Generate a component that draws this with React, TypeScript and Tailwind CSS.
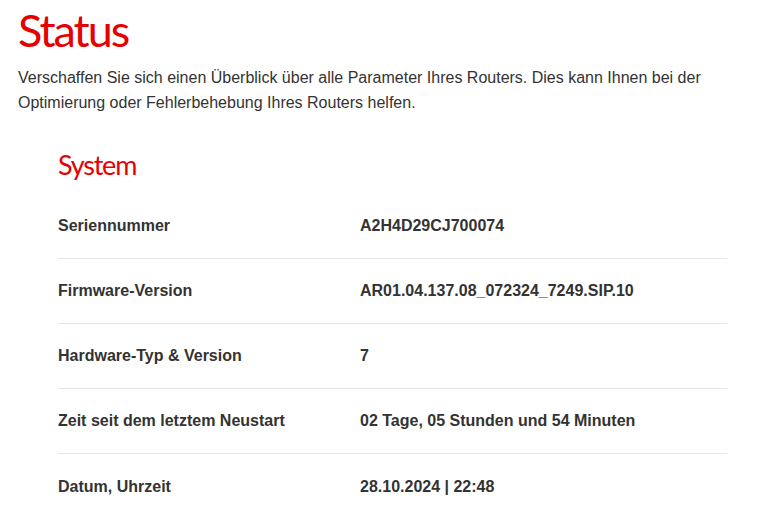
const rows: [string, string][] = [
  ["Seriennummer", "A2H4D29CJ700074"],
  ["Firmware-Version", "AR01.04.137.08_072324_7249.SIP.10"],
  ["Hardware-Typ & Version", "7"],
  ["Zeit seit dem letztem Neustart", "02 Tage, 05 Stunden und 54 Minuten"],
  ["Datum, Uhrzeit", "28.10.2024 | 22:48"],
];

export default function App() {
  return (
    <div className="min-h-screen bg-white px-[18px] font-['Liberation_Sans',Arial,sans-serif] text-[#333333]">
      <h1 className="pt-[2px] font-['Lato',sans-serif] text-[45px] leading-[56px] tracking-[-2px] text-[#e60000]">
        Status
      </h1>
      <p className="mt-[7px] text-[16px] leading-[25px]">
        Verschaffen Sie sich einen Überblick über alle Parameter Ihres Routers. Dies kann Ihnen bei der
        Optimierung oder Fehlerbehebung Ihres Routers helfen.
      </p>

      <div className="ml-[40px] mr-[20px] mt-[33px]">
        <h2 className="font-['Lato',sans-serif] text-[27px] leading-[34px] tracking-[-1.2px] text-[#e60000]">
          System
        </h2>
        <div className="mt-[12px]">
          {rows.map(([label, value], i) => (
            <div
              key={label}
              className={`flex h-[65px] items-center text-[16px] font-bold ${
                i < rows.length - 1 ? "border-b border-[#e5e5e5]" : ""
              }`}
            >
              <div className="w-[302px]">{label}</div>
              <div>{value}</div>
            </div>
          ))}
        </div>
      </div>
    </div>
  );
}
